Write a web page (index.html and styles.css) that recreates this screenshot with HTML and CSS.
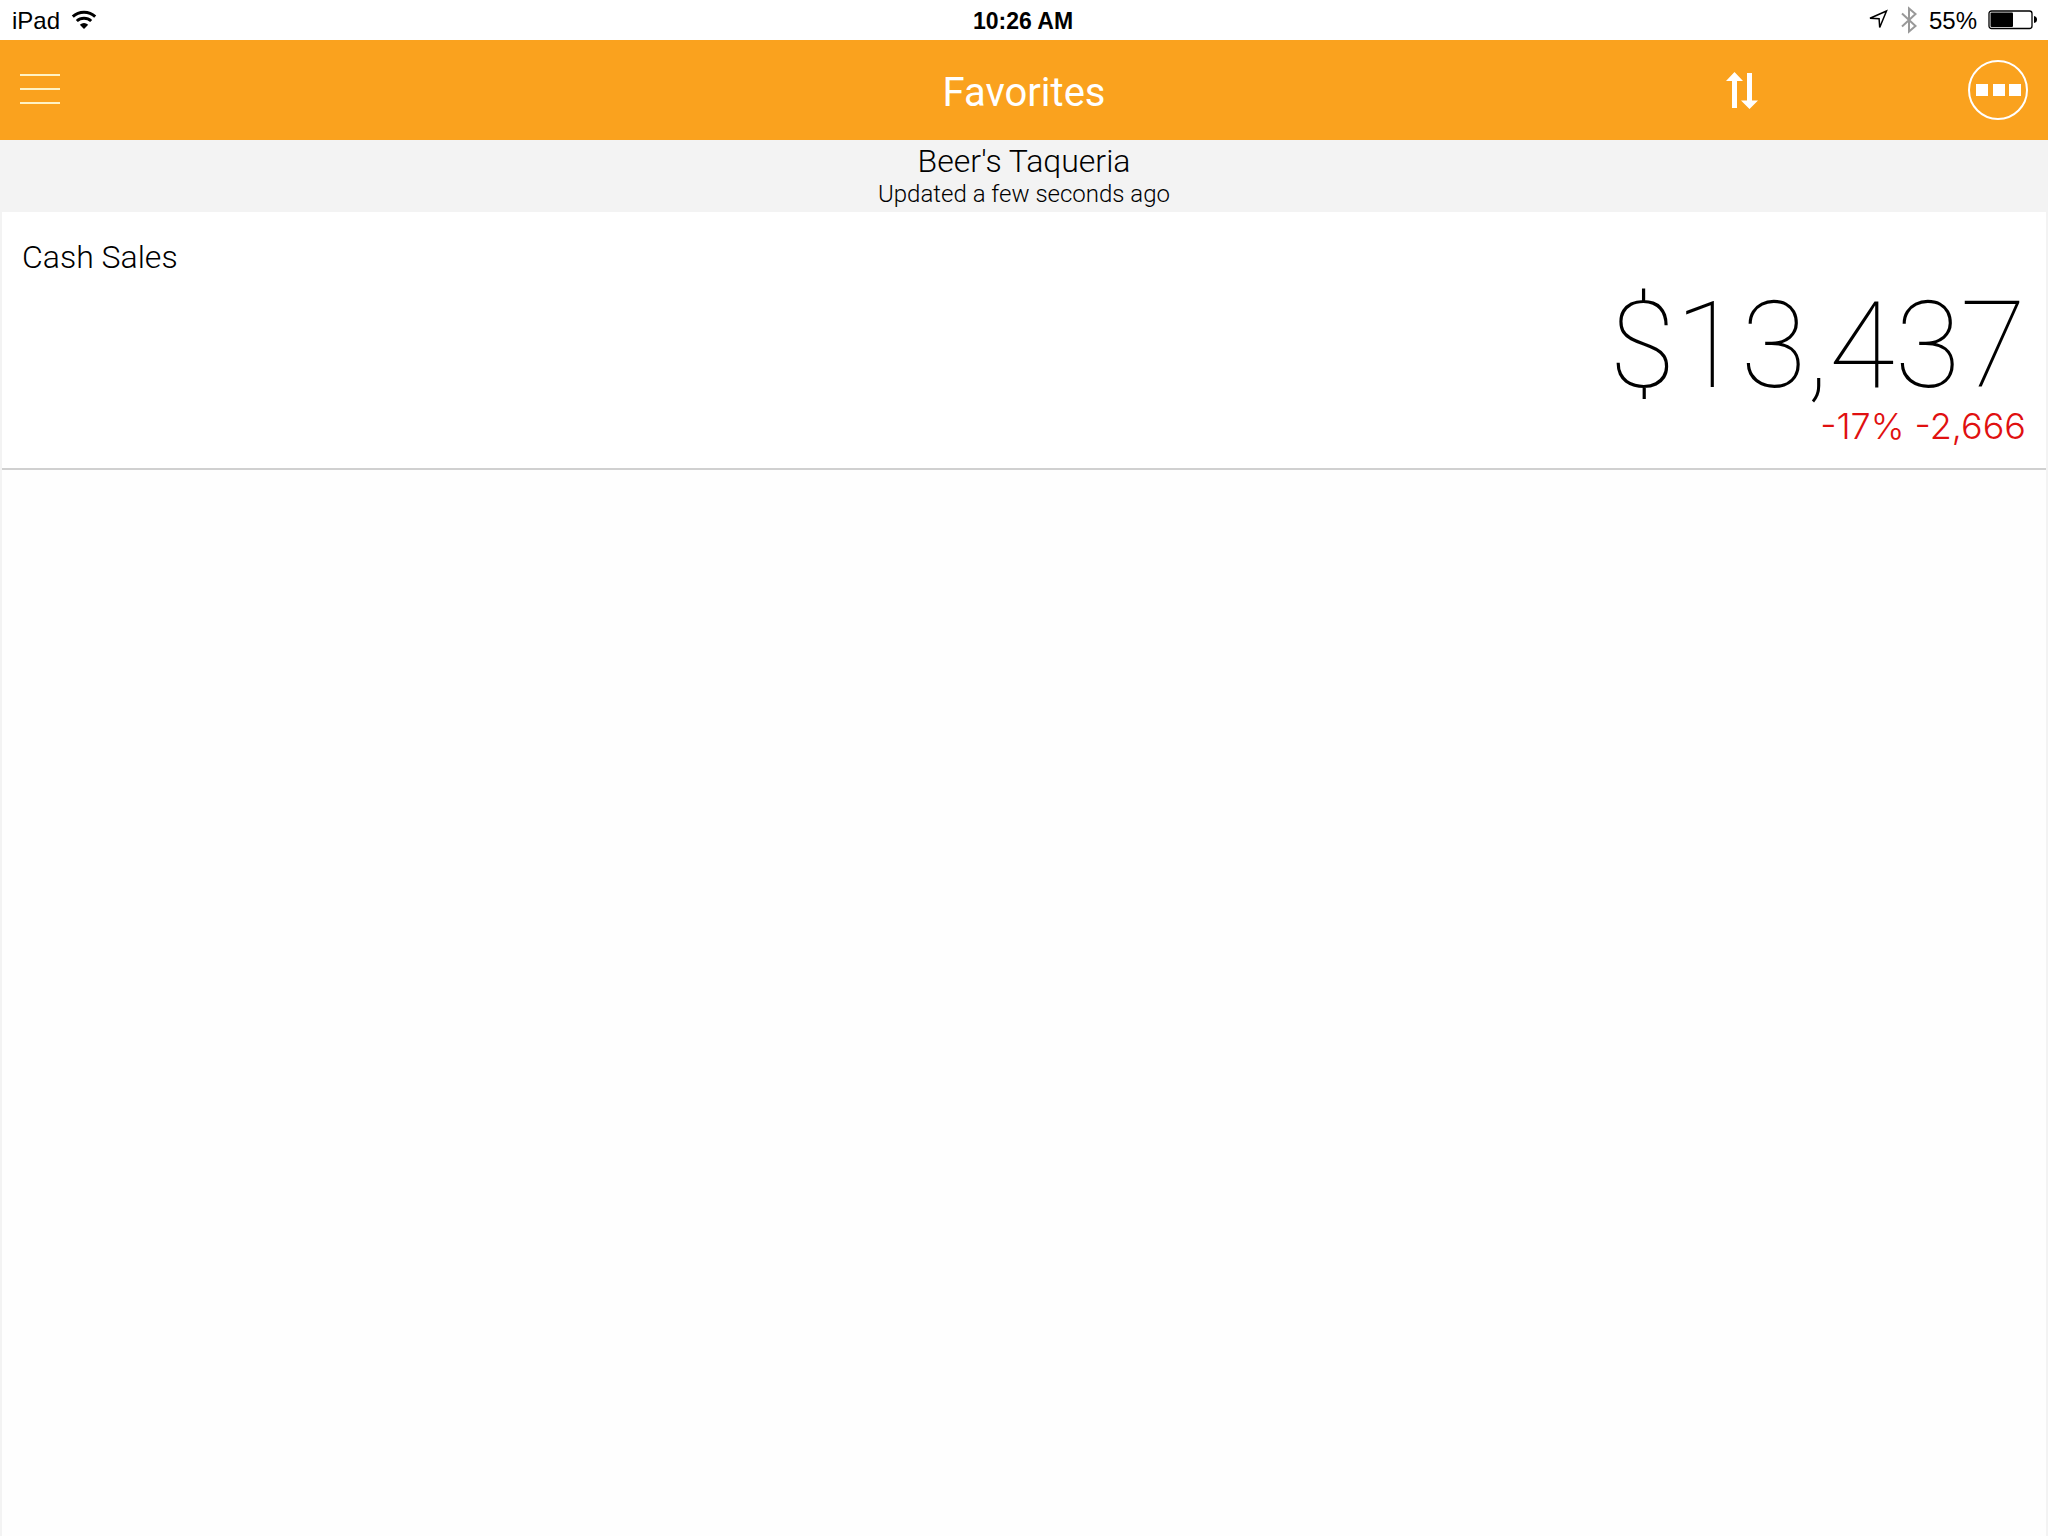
FILE: index.html
```html
<!DOCTYPE html>
<html lang="en">
<head>
<meta charset="utf-8">
<meta name="viewport" content="width=device-width, initial-scale=1">
<title>Favorites</title>
<link rel="stylesheet" href="styles.css">
</head>
<body>
<div class="status">
  <div class="status-left">
    <span>iPad</span>
    <svg class="wifi" width="26" height="20" viewBox="0 0 26 20" fill="none" stroke="#000" stroke-width="3" aria-hidden="true">
      <path d="M1.8 6.6C8 .9 18 .9 24.200 6.600"/>
      <path d="M5.800 11C9.800 7.300 16.200 7.300 20.200 11"/>
      <path d="M13 19L8.800 14.800Q13 11.400 17.200 14.800Z" fill="#000" stroke="none"/>
    </svg>
  </div>
  <time class="status-time">10:26 AM</time>
  <div class="status-right">
    <svg class="location" width="22" height="22" viewBox="0 0 22 22" fill="none" stroke="#000" stroke-width="1.500" stroke-linejoin="miter" aria-hidden="true">
      <path d="M19.500 2L12.700 18.500L12.100 9.700L3 9.300Z"/>
    </svg>
    <svg class="bluetooth" width="18" height="28" viewBox="0 0 18 28" fill="none" stroke="#999" stroke-width="2" aria-hidden="true">
      <path d="M2 7.500L15.500 20L9 25.500V2.500L15.500 8L2 20.500"/>
    </svg>
    <span>55%</span>
    <svg class="battery" width="50" height="20" viewBox="0 0 50 20" aria-hidden="true">
      <rect x="1" y="1" width="43" height="17.500" rx="2.500" fill="none" stroke="#000" stroke-width="1.300"/>
      <rect x="2.500" y="2.500" width="22.500" height="14.500" rx="1"/>
      <path d="M46 6Q49 6.500 49 9.500T46 13Z"/>
    </svg>
  </div>
</div>
<header class="bar">
  <button class="icon-button" type="button" aria-label="Menu">
    <svg width="40" height="32" viewBox="0 0 40 32" fill="#fff3c4" aria-hidden="true">
      <path d="M0 0h40v2H0zM0 14h40v2H0zM0 28h40v2H0z"/>
    </svg>
  </button>
  <h1 class="title">Favorites</h1>
  <div class="actions">
    <button class="icon-button" type="button" aria-label="Sort">
      <svg width="34" height="38" viewBox="0 0 34 38" fill="#fff" aria-hidden="true">
        <path d="M8.500 1L17 10H11V37H6V10H0Z"/>
        <path d="M23.500 38L32 29.500H26V2H21V29.500H15Z"/>
      </svg>
    </button>
    <button class="icon-button" type="button" aria-label="More">
      <svg width="60" height="60" viewBox="0 0 60 60" fill="#fff" aria-hidden="true">
        <circle cx="30" cy="30" r="29" fill="none" stroke="#fff" stroke-width="2"/>
        <path d="M8 24h12v12H8zM25 24h12v12H25zM41 24h12v12H41z"/>
      </svg>
    </button>
  </div>
</header>
<section class="location-info">
  <h2 class="place">Beer's Taqueria</h2>
  <p class="updated">Updated a few seconds ago</p>
</section>
<main class="list">
  <article class="metric">
    <h3 class="metric-name">Cash Sales</h3>
    <p class="metric-value">$13,437</p>
    <p class="metric-change">-17% -2,666</p>
  </article>
</main>
</body>
</html>
```
FILE: styles.css
```css
* {
  box-sizing: border-box;
}

body {
  margin: 0;
  min-height: 100vh;
  display: flex;
  flex-direction: column;
  background: #f3f3f3;
  color: #000;
  font-family: Roboto, sans-serif;
  font-weight: 300;
}

h1, h2, h3, p {
  margin: 0;
  font-weight: 300;
}

svg {
  display: block;
}

.status {
  display: grid;
  grid-template-columns: 1fr auto 1fr;
  align-items: center;
  height: 40px;
  padding: 0 10px 0 12px;
  background: #fff;
  font: 400 24px/38px "Liberation Sans", Arial, sans-serif;
}

.status span,
.status-time {
  padding-top: 2px;
}

.status-left,
.status-right {
  display: flex;
  align-items: center;
  gap: 11px;
}

.status-right {
  justify-content: flex-end;
}

.status-time {
  padding-right: 4px;
  font-size: 23px;
  font-weight: 700;
}

.bar {
  display: grid;
  grid-template-columns: 1fr auto 1fr;
  align-items: center;
  height: 100px;
  padding: 0 20px;
  background: #faa21e;
  color: #fff;
}

.title {
  padding-top: 6px;
  font-size: 40px;
  font-weight: 400;
  line-height: 48px;
}

.actions {
  display: flex;
  align-items: center;
  justify-content: flex-end;
  gap: 208px;
}

.icon-button {
  justify-self: start;
  padding: 0;
  border: 0;
  background: none;
  cursor: pointer;
}

.location-info {
  height: 72px;
  text-align: center;
}

.place {
  font-size: 32px;
  line-height: 42px;
}

.updated {
  font-size: 24px;
  line-height: 24px;
}

.list {
  flex: 1;
  margin: 0 2px;
  background: #fefefe;
}

.metric {
  padding: 24px 20px;
  border-bottom: 2px solid #d0d0d0;
  background: #fff;
}

.metric-name {
  font-size: 32px;
  line-height: 42px;
}

.metric-value {
  padding-top: 4px;
  font-size: 120px;
  font-weight: 100;
  line-height: 128px;
  text-align: right;
}

.metric-change {
  padding-bottom: 2px;
  color: #e01010;
  font-family: Inter, sans-serif;
  font-size: 36px;
  line-height: 32px;
  text-align: right;
}
```
